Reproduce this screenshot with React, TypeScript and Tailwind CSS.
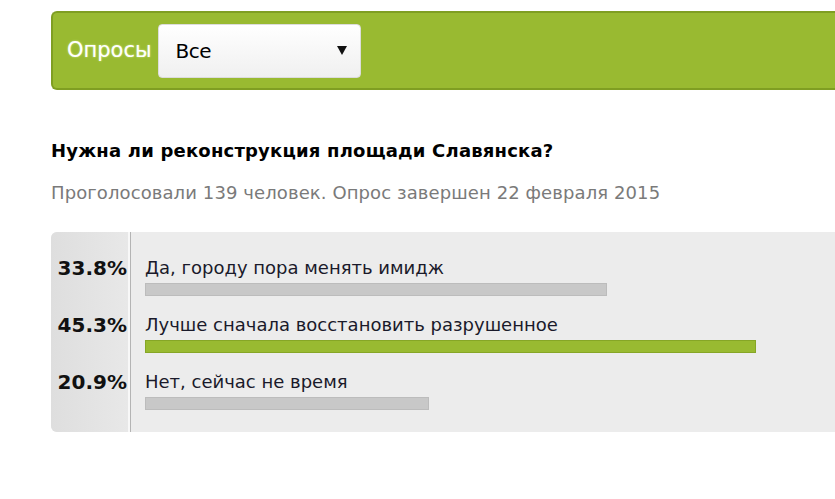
const options = [
    { percent: "33.8%", label: "Да, городу пора менять имидж", width: 462, leader: false },
    { percent: "45.3%", label: "Лучше сначала восстановить разрушенное", width: 611, leader: true },
    { percent: "20.9%", label: "Нет, сейчас не время", width: 284, leader: false },
];

export default function App() {
    return (
        <div className="w-[835px] h-[499px] overflow-hidden bg-white pl-[51px] pt-[11px] font-['DejaVu_Sans',sans-serif]">
            {/* Шапка с выбором */}
            <div className="h-[79px] w-[800px] rounded-l-[6px] border-y-2 border-l-2 border-[#7f9e22] bg-[#99ba31] flex items-center pl-[14px]">
                <span className="text-[21px] text-white [text-shadow:0_0_2px_#d8ee9a]">Опросы</span>
                <div className="ml-[6px] w-[203px] h-[54px] rounded-[4px] bg-gradient-to-b from-white to-[#f0f0f0] border border-[#dcdcdc] flex items-center justify-between pl-[17px] pr-[13px]">
                    <span className="text-[20px] text-black tracking-[-0.5px]">Все</span>
                    <svg width="10" height="9" viewBox="0 0 10 9">
                        <path d="M0 0 H10 L5 9 Z" fill="#111" />
                    </svg>
                </div>
            </div>

            {/* Вопрос */}
            <h1 className="mt-[50px] text-[18px] font-bold text-black leading-[22px] tracking-[0.2px]">
                Нужна ли реконструкция площади Славянска?
            </h1>
            <p className="mt-[20px] text-[18px] text-[#7a7a7a] leading-[22px] tracking-[0.1px]">
                Проголосовали 139 человек. Опрос завершен 22 февраля 2015
            </p>

            {/* Результаты */}
            <div className="mt-[28px] w-[800px] h-[200px] rounded-l-[6px] bg-[#ececec] flex">
                <div className="w-[77px] rounded-l-[6px] bg-gradient-to-r from-[#dedede] to-[#e8e8e8] pt-[24px] flex flex-col items-end pr-[1px]">
                    {options.map((o) => (
                        <div key={o.percent} className="h-[57px] text-[20px] font-bold text-[#111] leading-[24px]">
                            {o.percent}
                        </div>
                    ))}
                </div>
                <div className="w-[2px] bg-[#f8f8f8]" />
                <div className="w-[1px] bg-[#b4b4b4]" />
                <div className="flex-1 pl-[14px] pt-[24px]">
                    {options.map((o) => (
                        <div key={o.label} className="h-[57px]">
                            <div className="text-[18px] text-[#1a1a2a] leading-[24px]">{o.label}</div>
                            <div
                                className={`mt-[3px] h-[13px] border ${o.leader ? "bg-[#99ba31] border-[#86a626]" : "bg-[#c8c8c8] border-[#bcbcbc]"}`}
                                style={{ width: o.width }}
                            />
                        </div>
                    ))}
                </div>
            </div>
        </div>
    );
}
